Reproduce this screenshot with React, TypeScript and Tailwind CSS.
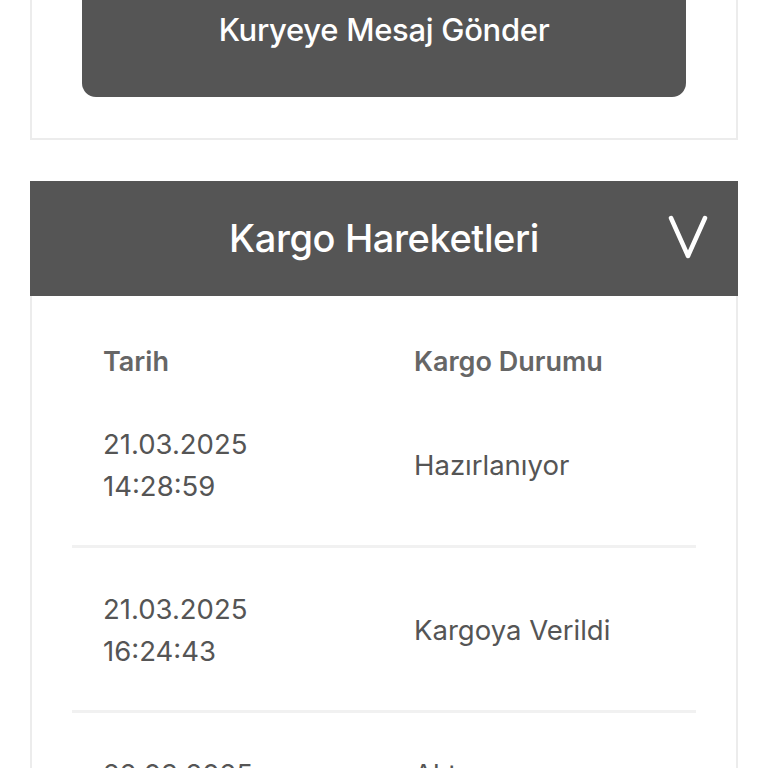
import React from "react";

type Move = { date: string; time: string; status: string };

const moves: Move[] = [
  { date: "21.03.2025", time: "14:28:59", status: "Hazırlanıyor" },
  { date: "21.03.2025", time: "16:24:43", status: "Kargoya Verildi" },
  { date: "22.03.2025", time: "09:12:05", status: "Aktarma Merkezinde" },
];

function Chevron() {
  return (
    <svg viewBox="0 0 40 44" fill="none" className="h-[44px] w-[40px]">
      <path d="M3 3l17 38L37 3" stroke="white" strokeWidth="4.5" strokeLinecap="round" strokeLinejoin="round" />
    </svg>
  );
}

export default function App() {
  return (
    <div className="h-[768px] w-[768px] overflow-hidden bg-white px-[30px] font-['Inter','Noto_Sans',sans-serif]">
      {/* courier message card */}
      <div className="-mt-[37px] border-x-2 border-b-2 border-[#ececec] px-[50px] pb-[41px]">
        <button className="flex h-[134px] w-full items-center justify-center rounded-b-[14px] bg-[#555555] text-[31px] font-medium tracking-[-0.3px] text-white">
          Kuryeye Mesaj Gönder
        </button>
      </div>

      {/* cargo movements */}
      <div className="mt-[41px]">
        <div className="relative flex h-[115px] items-center justify-center bg-[#555555]">
          <span className="text-[38px] font-medium tracking-[-0.4px] text-white">Kargo Hareketleri</span>
          <span className="absolute right-[30px] top-[34px]">
            <Chevron />
          </span>
        </div>
        <div className="border-x-2 border-[#ececec] px-[40px]">
          <div className="grid grid-cols-[311px_1fr] px-[31px] pt-[50px] pb-[5px] text-[27px] font-semibold leading-[32px] text-[#666666]">
            <span>Tarih</span>
            <span>Kargo Durumu</span>
          </div>
          {moves.map((m) => (
            <div
              key={m.date + m.time}
              className="grid grid-cols-[311px_1fr] items-center border-b-[3px] border-[#f1f1f1] px-[31px] pt-[40px] pb-[38px] text-[27.5px] text-[#555555]"
            >
              <div className="leading-[42px]">
                <div>{m.date}</div>
                <div>{m.time}</div>
              </div>
              <span className="leading-[42px]">{m.status}</span>
            </div>
          ))}
        </div>
      </div>
    </div>
  );
}
